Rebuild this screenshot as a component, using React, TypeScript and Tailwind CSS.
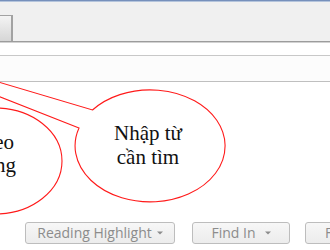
import React from "react";

function Caret() {
  return (
    <svg width="6" height="4" viewBox="0 0 6 4" className="shrink-0">
      <path d="M0 0.5 H6 L3 3.5 Z" fill="#8c8c8c" />
    </svg>
  );
}

function DlgButton({
  label,
  caret,
  width,
  caretGap,
}: {
  label: string;
  caret?: boolean;
  width: string;
  caretGap?: string;
}) {
  return (
    <div
      className={`flex h-[22px] shrink-0 items-center justify-center rounded-[3px] border border-[#bdbdbd] bg-linear-to-b from-[#f7f7f7] to-[#ececec] font-['Open_Sans',sans-serif] text-[14px] leading-none text-[#8c8c8c] ${width}`}
    >
      <span>{label}</span>
      {caret && <span className={`flex items-center ${caretGap}`}><Caret /></span>}
    </div>
  );
}

export default function App() {
  return (
    <div className="relative flex h-[250px] w-[330px] flex-col overflow-hidden bg-white">
      {/* top title edge */}
      <div className="h-px shrink-0 bg-[#7690bb]" />
      <div className="h-px shrink-0 bg-[#b4c4dc]" />
      {/* tab strip */}
      <div className="flex h-[39px] shrink-0 items-end bg-[#f0f0f0]">
        <div className="h-[26px] w-[13px] border-t border-r-2 border-[#a2a2a2] bg-linear-to-b from-[#f4f4f4] to-[#d6d6d6]" />
      </div>
      <div className="h-px shrink-0 bg-[#9c9c9c]" />
      <div className="h-px shrink-0 bg-[#d2d2d2]" />
      {/* find field */}
      <div className="h-[12px] shrink-0 bg-white" />
      <div className="h-px shrink-0 bg-[#c8c8c8]" />
      <div className="h-[25px] shrink-0 bg-[#fcfcfc]" />
      <div className="h-px shrink-0 bg-[#bfbfbf]" />
      {/* body */}
      <div className="h-[140px] shrink-0" />
      {/* buttons */}
      <div className="flex h-[22px] shrink-0 pl-[25px]">
        <DlgButton label="Reading Highlight" caret width="w-[150px]" caretGap="ml-[5px]" />
        <div className="ml-[17px]">
          <DlgButton label="Find In" caret width="w-[98px]" caretGap="ml-[9px]" />
        </div>
        <div className="ml-[15px] flex justify-start">
          <div className="flex h-[22px] w-[90px] shrink-0 items-center rounded-[3px] border border-[#bdbdbd] bg-linear-to-b from-[#f7f7f7] to-[#ececec] pl-[19px] font-['Open_Sans',sans-serif] text-[14px] leading-none text-[#8c8c8c]">
            Find Next
          </div>
        </div>
      </div>

      {/* callout drawing overlay */}
      <svg
        className="pointer-events-none absolute left-0 top-0"
        width="330"
        height="250"
        viewBox="0 0 330 250"
      >
        <ellipse cx="-5" cy="161" rx="67" ry="53" fill="white" stroke="#ff1a1a" strokeWidth="1.1" />
        <path
          d="M79 128 L-150 38 L92.5 110 A75 56 0 1 1 79 128 Z"
          fill="white"
          stroke="#ff1a1a"
          strokeWidth="1.1"
          strokeLinejoin="miter"
        />
      </svg>

      {/* callout texts */}
      <div className="absolute left-[-86px] top-[131px] w-[100px] text-right font-['Liberation_Serif','Times_New_Roman',serif] text-[21px] leading-[23px] text-[#111]">
        theo
      </div>
      <div className="absolute left-[-84px] top-[154px] w-[100px] text-right font-['Liberation_Serif','Times_New_Roman',serif] text-[21px] leading-[23px] text-[#111]">
        dạng
      </div>
      <div className="absolute left-[73px] top-[121px] w-[150px] text-center font-['Liberation_Serif','Times_New_Roman',serif] text-[21px] leading-[24px] text-[#111]">
        Nhập từ
        <br />
        cần tìm
      </div>
    </div>
  );
}
